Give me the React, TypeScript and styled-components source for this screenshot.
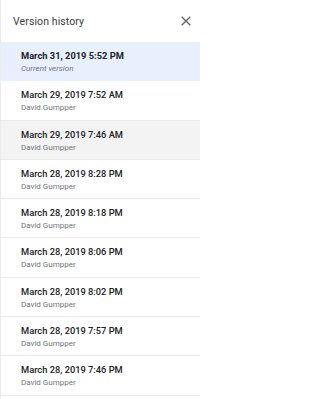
import { FC, ReactElement } from 'react';
import styled, { createGlobalStyle } from 'styled-components';

const GlobalStyle = createGlobalStyle`
  html, body {
    margin: 0;
    padding: 0;
    background: #ffffff;
  }
  body {
    font-family: Roboto, "Noto Sans", Arial, sans-serif;
  }
`;

type Version = {
  date: string;
  author: string;
  current?: boolean;
  hovered?: boolean;
};

const versions: Version[] = [
  { date: 'March 31, 2019 5:52 PM', author: 'Current version', current: true },
  { date: 'March 29, 2019 7:52 AM', author: 'David Gumpper' },
  { date: 'March 29, 2019 7:46 AM', author: 'David Gumpper', hovered: true },
  { date: 'March 28, 2019 8:28 PM', author: 'David Gumpper' },
  { date: 'March 28, 2019 8:18 PM', author: 'David Gumpper' },
  { date: 'March 28, 2019 8:06 PM', author: 'David Gumpper' },
  { date: 'March 28, 2019 8:02 PM', author: 'David Gumpper' },
  { date: 'March 28, 2019 7:57 PM', author: 'David Gumpper' },
  { date: 'March 28, 2019 7:46 PM', author: 'David Gumpper' },
];

const Panel = styled.div`
  width: 200px;
  height: 399px;
  overflow: hidden;
  box-sizing: border-box;
  border-left: 1px solid #ececec;
  background: #ffffff;
`;

const Header = styled.div`
  height: 42px;
  display: flex;
  align-items: center;
  justify-content: space-between;
  padding: 0 4px 0 12px;
`;

const Title = styled.div`
  font-size: 10.5px;
  color: #3c4043;
  letter-spacing: 0.1px;
`;

const CloseButton = styled.button`
  width: 20px;
  height: 20px;
  border: none;
  background: transparent;
  padding: 0;
  display: flex;
  align-items: center;
  justify-content: center;
  cursor: pointer;
`;

const List = styled.div`
  display: flex;
  flex-direction: column;
`;

const Row = styled.div<{ $current?: boolean; $hovered?: boolean }>`
  height: 39.3px;
  box-sizing: border-box;
  padding: 8px 0 0 20px;
  border-bottom: 1px solid ${(p) => (p.$current ? 'transparent' : '#ececec')};
  background: ${(p) => (p.$current ? '#e8f0fe' : p.$hovered ? '#f3f3f3' : '#ffffff')};
`;

const DateText = styled.div<{ $current?: boolean }>`
  font-size: 9.3px;
  line-height: 12px;
  font-weight: ${(p) => (p.$current ? 700 : 500)};
  color: #202124;
`;

const Author = styled.div<{ $current?: boolean }>`
  margin-top: 1px;
  font-size: 8px;
  line-height: 11px;
  font-style: ${(p) => (p.$current ? 'italic' : 'normal')};
  color: #70757a;
`;

const App: FC = (): ReactElement => {
  return (
    <>
      <GlobalStyle />
      <Panel>
        <Header>
          <Title>Version history</Title>
          <CloseButton aria-label="Close">
            <svg width="10" height="10" viewBox="0 0 10 10">
              <path d="M0.7 0.7 L9.3 9.3 M9.3 0.7 L0.7 9.3" stroke="#5f6368" strokeWidth="1.3" />
            </svg>
          </CloseButton>
        </Header>
        <List>
          {versions.map((v) => (
            <Row key={v.date} $current={v.current} $hovered={v.hovered}>
              <DateText $current={v.current}>{v.date}</DateText>
              <Author $current={v.current}>{v.author}</Author>
            </Row>
          ))}
        </List>
      </Panel>
    </>
  );
};

export default App;
